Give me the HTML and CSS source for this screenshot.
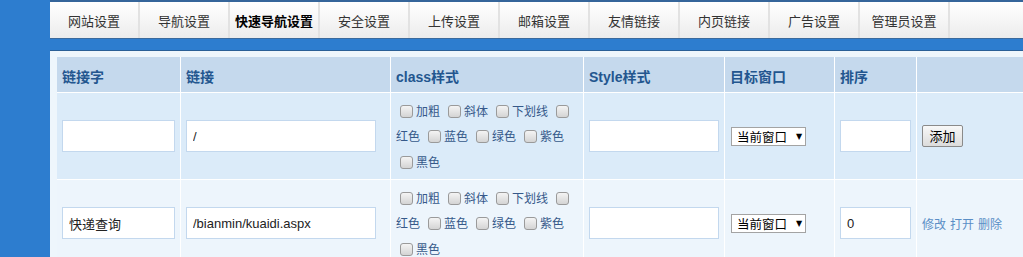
FILE: index.html
```html
<!DOCTYPE html>
<html lang="zh-CN">
<head>
<meta charset="utf-8">
<title>快速导航设置</title>
<link rel="stylesheet" href="styles.css">
</head>
<body>
<div class="page">
  <nav class="tabs">
    <a class="tab">网站设置</a>
    <a class="tab">导航设置</a>
    <a class="tab active">快速导航设置</a>
    <a class="tab">安全设置</a>
    <a class="tab">上传设置</a>
    <a class="tab">邮箱设置</a>
    <a class="tab">友情链接</a>
    <a class="tab">内页链接</a>
    <a class="tab">广告设置</a>
    <a class="tab">管理员设置</a>
  </nav>
  <div class="panel">
    <table class="grid">
      <thead>
        <tr>
          <th class="c1">链接字</th>
          <th class="c2">链接</th>
          <th class="c3">class样式</th>
          <th class="c4">Style样式</th>
          <th class="c5">目标窗口</th>
          <th class="c6">排序</th>
          <th class="c7"></th>
        </tr>
      </thead>
      <tbody>
        <tr class="row-a">
          <td><input class="field f-name" type="text" value=""></td>
          <td><input class="field f-url" type="text" value="/"></td>
          <td>
            <div class="opts">
              <div class="line"><input type="checkbox" class="cb"><span>加粗</span><input type="checkbox" class="cb"><span>斜体</span><input type="checkbox" class="cb"><span>下划线</span><input type="checkbox" class="cb"></div>
              <div class="line"><span class="first">红色</span><input type="checkbox" class="cb"><span>蓝色</span><input type="checkbox" class="cb"><span>绿色</span><input type="checkbox" class="cb"><span>紫色</span></div>
              <div class="line"><input type="checkbox" class="cb"><span>黑色</span></div>
            </div>
          </td>
          <td><input class="field f-style" type="text" value=""></td>
          <td><div class="select"><span>当前窗口</span><span class="arrow">▼</span></div></td>
          <td><input class="field f-sort" type="text" value=""></td>
          <td><button class="btn" type="button">添加</button></td>
        </tr>
        <tr class="row-b">
          <td><input class="field f-name" type="text" value="快递查询"></td>
          <td><input class="field f-url" type="text" value="/bianmin/kuaidi.aspx"></td>
          <td>
            <div class="opts">
              <div class="line"><input type="checkbox" class="cb"><span>加粗</span><input type="checkbox" class="cb"><span>斜体</span><input type="checkbox" class="cb"><span>下划线</span><input type="checkbox" class="cb"></div>
              <div class="line"><span class="first">红色</span><input type="checkbox" class="cb"><span>蓝色</span><input type="checkbox" class="cb"><span>绿色</span><input type="checkbox" class="cb"><span>紫色</span></div>
              <div class="line"><input type="checkbox" class="cb"><span>黑色</span></div>
            </div>
          </td>
          <td><input class="field f-style" type="text" value=""></td>
          <td><div class="select"><span>当前窗口</span><span class="arrow">▼</span></div></td>
          <td><input class="field f-sort" type="text" value="0"></td>
          <td><a class="act">修改</a><a class="act">打开</a><a class="act">删除</a></td>
        </tr>
      </tbody>
    </table>
  </div>
</div>
</body>
</html>
```

FILE: styles.css
```css
html, body {
  margin: 0;
  padding: 0;
}
body {
  width: 1023px;
  height: 257px;
  overflow: hidden;
  background: #2d7dcf;
  font-family: "Liberation Sans", "Noto Sans CJK SC", sans-serif;
  font-size: 13px;
}
.page {
  width: 1023px;
}
.tabs {
  display: flex;
  margin-left: 50px;
  height: 36px;
  border-top: 2px solid #35659a;
  border-bottom: 1px solid #3b6a9c;
  background: linear-gradient(#ffffff, #ececec);
}
.tab {
  width: 88px;
  flex: none;
  display: flex;
  align-items: center;
  justify-content: center;
  border-right: 2px solid #e2e2e2;
  color: #333;
  font-size: 13px;
  font-family: "Noto Sans CJK SC", sans-serif;
  cursor: pointer;
}
.tab.active {
  color: #000;
  font-weight: bold;
}
.panel {
  margin: 11px 0 0 50px;
  width: 1100px;
  border-top: 1px solid #2a5f96;
  padding: 6px 7px 7px 7px;
  background: #eef6fc;
}
.grid {
  border-collapse: separate;
  border-spacing: 0;
  table-layout: fixed;
  width: 1010px;
}
.grid th, .grid td {
  box-sizing: border-box;
  border-right: 1px solid #fff;
  border-bottom: 1px solid #fff;
  padding: 0 5px;
  text-align: left;
  vertical-align: middle;
}
.grid th {
  height: 36px;
  background: #c5d9ed;
  color: #23568f;
  font-weight: bold;
  font-size: 14px;
  padding-top: 2px;
}
.c1 { width: 124px; }
.c2 { width: 210px; }
.c3 { width: 193px; }
.c4 { width: 141px; }
.c5 { width: 110px; }
.c6 { width: 82px; }
.c7 { width: 150px; }
.row-a td {
  height: 87px;
  background: #dbebf9;
}
.row-b td {
  height: 87px;
  background: #edf5fc;
}
.field {
  box-sizing: border-box;
  height: 32px;
  margin: 0;
  border: 1px solid #c3d8ee;
  background: #fff;
  padding: 0 6px;
  font-family: "Liberation Sans", "Noto Sans CJK SC", sans-serif;
  font-size: 13px;
  color: #222;
  outline: none;
  vertical-align: middle;
}
.f-name { width: 113px; }
.f-url { width: 190px; }
.f-style { width: 130px; }
.f-sort { width: 71px; }
.opts {
  font-family: "Noto Sans CJK SC", sans-serif;
  font-size: 12px;
  color: #36598a;
}
.line {
  height: 25.5px;
  line-height: 25.5px;
  white-space: nowrap;
}
.cb {
  appearance: none;
  -webkit-appearance: none;
  box-sizing: border-box;
  width: 13px;
  height: 13px;
  margin: 0 3px 0 4px;
  border: 1px solid #9a9a9a;
  border-radius: 3px;
  background: linear-gradient(#f4f4f4, #d4d4d4);
  vertical-align: -2px;
}
.line span {
  margin-right: 4px;
}
.select {
  display: inline-flex;
  align-items: center;
  box-sizing: border-box;
  width: 75px;
  height: 19px;
  margin-left: 1px;
  padding-left: 5px;
  border: 1px solid #a3a3a3;
  background: #fff;
  font-family: "Noto Sans CJK SC", sans-serif;
  font-size: 12.5px;
  color: #000;
  vertical-align: middle;
}
.select .arrow {
  font-size: 8px;
  margin-left: 9px;
  font-family: "DejaVu Sans", sans-serif;
}
.btn {
  box-sizing: border-box;
  width: 41px;
  height: 22px;
  margin: 0;
  padding: 0;
  border: 1px solid #8a8a8a;
  border-radius: 2px;
  background: linear-gradient(#f8f8f8, #dcdcdc);
  font-family: "Noto Sans CJK SC", sans-serif;
  font-size: 13px;
  color: #000;
  line-height: 20px;
  vertical-align: middle;
}
.act {
  color: #5a8ec6;
  font-family: "Noto Sans CJK SC", sans-serif;
  font-size: 12px;
  margin-right: 4px;
  cursor: pointer;
}
```
